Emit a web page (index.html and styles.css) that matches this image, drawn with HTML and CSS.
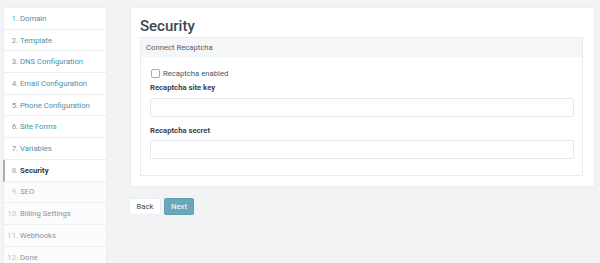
FILE: index.html
```html
<!DOCTYPE html>
<html lang="en">
<head>
    <meta charset="UTF-8">
    <meta name="viewport" content="width=device-width, initial-scale=1.0">
    <title>Setup - Security</title>
    <link rel="stylesheet" href="styles.css">
</head>
<body>
    <ol class="steps">
        <li class="step done"><a href="#">Domain</a></li>
        <li class="step done"><a href="#">Template</a></li>
        <li class="step done"><a href="#">DNS Configuration</a></li>
        <li class="step done"><a href="#">Email Configuration</a></li>
        <li class="step done"><a href="#">Phone Configuration</a></li>
        <li class="step done"><a href="#">Site Forms</a></li>
        <li class="step done"><a href="#">Variables</a></li>
        <li class="step active">Security</li>
        <li class="step todo">SEO</li>
        <li class="step todo">Billing Settings</li>
        <li class="step todo">Webhooks</li>
        <li class="step todo">Done</li>
    </ol>

    <div class="main">
        <div class="card">
            <h1 class="page-title">Security</h1>

            <div class="panel">
                <div class="panel-heading">Connect Recaptcha</div>
                <div class="panel-body">
                    <label class="checkbox">
                        <span class="box"></span>
                        Recaptcha enabled
                    </label>

                    <div class="form-group">
                        <label class="field-label">Recaptcha site key</label>
                        <input class="field" type="text">
                    </div>

                    <div class="form-group">
                        <label class="field-label">Recaptcha secret</label>
                        <input class="field" type="text">
                    </div>
                </div>
            </div>
        </div>

        <div class="actions">
            <button class="btn btn-default">Back</button>
            <button class="btn btn-primary">Next</button>
        </div>
    </div>
</body>
</html>
```

FILE: styles.css
```css
* {
    margin: 0;
    padding: 0;
    box-sizing: border-box;
}

body {
    font-family: Roboto, 'Liberation Sans', sans-serif;
    font-size: 7.7px;
    background: #f2f3f5;
    color: #3d4754;
    display: flex;
    align-items: flex-start;
    padding: 7px 5px 0 3px;
    overflow: hidden;
}

/* sidebar steps */
.steps {
    width: 104px;
    flex-shrink: 0;
    background: white;
    border: 1px solid #eceef0;
    list-style: none;
    counter-reset: step;
    color: #4f8ea8;
}

.step {
    counter-increment: step;
    height: 21.7px;
    display: flex;
    align-items: center;
    border-bottom: 1px solid #eceef0;
}

.step:last-child {
    border-bottom: none;
}

.step::before {
    content: counter(step) ".";
    width: 14px;
    margin-right: 2px;
    text-align: right;
    flex-shrink: 0;
}

.step a {
    color: #4f8ea8;
    text-decoration: none;
}

.step.done::before {
    color: #6a9db2;
}

.step.active {
    border-left: 2px solid #a9adb3;
    margin-left: -1px;
    font-weight: 700;
    color: #2f3a46;
}

.step.active::before {
    color: #9aa0a7;
    font-weight: 400;
    width: 13px;
}

.step.todo {
    background: #fcfcfc;
    color: #8c929a;
}

.step.todo::before {
    color: #bfc3c8;
}

/* main area */
.main {
    margin-left: 23px;
    width: 465px;
}

.card {
    background: white;
    border: 1px solid #eceef0;
    padding: 9px 11px 10px 9px;
}

.page-title {
    font-size: 15px;
    line-height: 19px;
    font-weight: 500;
    color: #3a4654;
    margin-bottom: 1px;
}

.panel {
    border: 1px solid #eaecef;
}

.panel-heading {
    height: 19px;
    line-height: 19px;
    background: #f5f6f8;
    padding-left: 5px;
    color: #555d66;
}

.panel-body {
    padding: 12px 8px 16px 9px;
}

.checkbox {
    display: flex;
    align-items: center;
    height: 9px;
    color: #4a5360;
}

.box {
    width: 9px;
    height: 9px;
    border: 1px solid #a7acb2;
    border-radius: 2px;
    margin-left: 1px;
    margin-right: 3px;
}

.form-group {
    margin-top: 5px;
}

.form-group + .form-group {
    margin-top: 9px;
}

.field-label {
    display: block;
    font-weight: 700;
    line-height: 10px;
    margin-bottom: 4.5px;
    color: #3a4452;
}

.field {
    display: block;
    width: 100%;
    height: 19px;
    border: 1px solid #e6e8eb;
    border-radius: 2px;
    background: white;
    outline: none;
}

.actions {
    display: flex;
    gap: 3px;
    margin-top: 11px;
    margin-left: -1px;
}

.btn {
    font-family: inherit;
    font-size: 7.7px;
    height: 17px;
    border-radius: 2px;
    cursor: pointer;
}

.btn-default {
    width: 32px;
    background: white;
    border: 1px solid #eceef0;
    color: #3d4754;
}

.btn-primary {
    width: 30px;
    background: #68a8ba;
    border: 1px solid #5f9fb2;
    color: white;
}
```
